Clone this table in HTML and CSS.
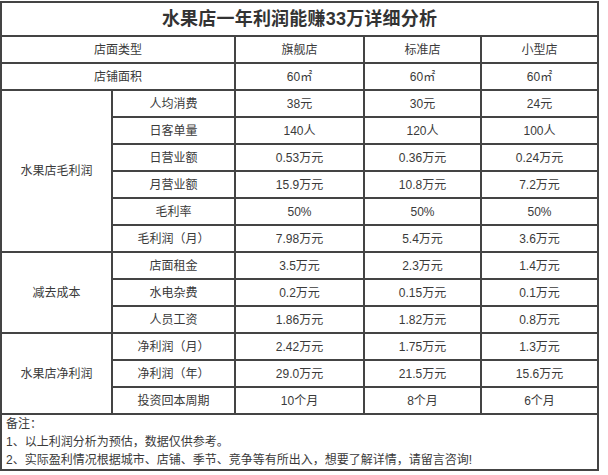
FILE: index.html
```html
<!DOCTYPE html>
<html lang="zh-CN">
<head>
<meta charset="utf-8">
<title>水果店一年利润能赚33万详细分析</title>
<link rel="stylesheet" href="styles.css">
</head>
<body>
<table class="sheet">
  <colgroup>
    <col class="c-group">
    <col class="c-item">
    <col class="c-a">
    <col class="c-b">
    <col class="c-c">
  </colgroup>
  <tr class="r-title"><td colspan="5" class="title">水果店一年利润能赚33万详细分析</td></tr>
  <tr><td colspan="2">店面类型</td><td>旗舰店</td><td>标准店</td><td>小型店</td></tr>
  <tr><td colspan="2">店铺面积</td><td>60㎡</td><td>60㎡</td><td>60㎡</td></tr>
  <tr><td rowspan="6">水果店毛利润</td><td>人均消费</td><td>38元</td><td>30元</td><td>24元</td></tr>
  <tr><td>日客单量</td><td>140人</td><td>120人</td><td>100人</td></tr>
  <tr><td>日营业额</td><td>0.53万元</td><td>0.36万元</td><td>0.24万元</td></tr>
  <tr><td>月营业额</td><td>15.9万元</td><td>10.8万元</td><td>7.2万元</td></tr>
  <tr><td>毛利率</td><td>50%</td><td>50%</td><td>50%</td></tr>
  <tr><td>毛利润（月）</td><td>7.98万元</td><td>5.4万元</td><td>3.6万元</td></tr>
  <tr><td rowspan="3">减去成本</td><td>店面租金</td><td>3.5万元</td><td>2.3万元</td><td>1.4万元</td></tr>
  <tr><td>水电杂费</td><td>0.2万元</td><td>0.15万元</td><td>0.1万元</td></tr>
  <tr><td>人员工资</td><td>1.86万元</td><td>1.82万元</td><td>0.8万元</td></tr>
  <tr><td rowspan="3">水果店净利润</td><td>净利润（月）</td><td>2.42万元</td><td>1.75万元</td><td>1.3万元</td></tr>
  <tr><td>净利润（年）</td><td>29.0万元</td><td>21.5万元</td><td>15.6万元</td></tr>
  <tr><td>投资回本周期</td><td>10个月</td><td>8个月</td><td>6个月</td></tr>
  <tr class="r-note"><td colspan="5" class="note">
    <p>备注：</p>
    <p>1、以上利润分析为预估，数据仅供参考。</p>
    <p>2、实际盈利情况根据城市、店铺、季节、竞争等有所出入，想要了解详情，请留言咨询!</p>
  </td></tr>
</table>
</body>
</html>
```

FILE: styles.css
```css
html, body {
  margin: 0;
  padding: 0;
  background: #ffffff;
}
body {
  padding-top: 1px;
  font-family: "Liberation Sans", "Noto Sans CJK SC", sans-serif;
  color: #3a3a3a;
}
.sheet {
  border-collapse: collapse;
  table-layout: fixed;
  width: 597px;
  font-size: 12px;
}
.c-group { width: 111px; }
.c-item { width: 123px; }
.c-a { width: 129px; }
.c-b { width: 117px; }
.c-c { width: 117px; }
.sheet td {
  border: 2px solid #444444;
  text-align: center;
  vertical-align: middle;
  height: 25px;
  padding: 0;
  line-height: 16px;
}
.sheet .title {
  height: 32px;
  font-size: 18px;
  font-weight: bold;
  color: #333333;
  letter-spacing: 0.2px;
}
.sheet .note {
  height: 52px;
  text-align: left;
  padding: 0 0 0 4px;
}
.note p {
  margin: 0;
  line-height: 18px;
}
```
